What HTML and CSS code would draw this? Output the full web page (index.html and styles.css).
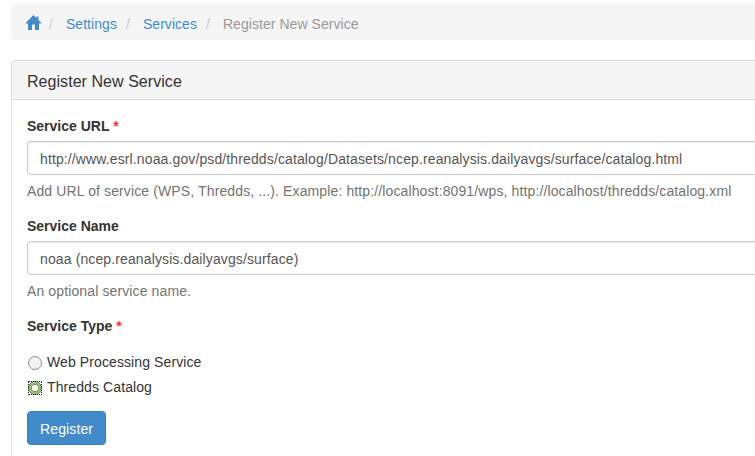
FILE: index.html
```html
<!DOCTYPE html>
<html lang="en">
<head>
<meta charset="utf-8">
<title>Register New Service</title>
<link rel="stylesheet" href="styles.css">
</head>
<body>
<main class="container">
  <ol class="breadcrumb">
    <li><a href="#" aria-label="Home"><svg class="home" viewBox="0 0 16 15" width="16" height="15"><path d="M7.5 0L0 7.5V8.5h2V15h4V9.5h3V15h4V8.5h2V7.5L12.5 5V1.5h-2V3z"/></svg></a></li>
    <li><a href="#">Settings</a></li>
    <li><a href="#">Services</a></li>
    <li class="active">Register New Service</li>
  </ol>
  <section class="panel">
    <h3 class="panel-heading">Register New Service</h3>
    <form class="panel-body">
      <div class="form-group">
        <label class="control-label" for="url">Service URL <span class="required">*</span></label>
        <input class="form-control" id="url" type="text" value="http://www.esrl.noaa.gov/psd/thredds/catalog/Datasets/ncep.reanalysis.dailyavgs/surface/catalog.html">
        <p class="help-block">Add URL of service (WPS, Thredds, ...). Example: http://localhost:8091/wps, http://localhost/thredds/catalog.xml</p>
      </div>
      <div class="form-group">
        <label class="control-label" for="name">Service Name</label>
        <input class="form-control" id="name" type="text" value="noaa (ncep.reanalysis.dailyavgs/surface)">
        <p class="help-block">An optional service name.</p>
      </div>
      <div class="form-group">
        <div class="control-label">Service Type <span class="required">*</span></div>
        <div class="radios">
          <label class="radio"><span class="dot"></span>Web Processing Service</label>
          <label class="radio"><span class="focus"><span class="dot selected"></span></span>Thredds Catalog</label>
        </div>
      </div>
      <button class="btn" type="button">Register</button>
    </form>
  </section>
</main>
</body>
</html>
```
FILE: styles.css
```css
* { box-sizing: border-box; }
body { margin: 0; font: 14px/20px "Liberation Sans", Arial, sans-serif; color: #333; background: #fff; }
a { color: #428bca; text-decoration: none; }
.container { display: flex; flex-direction: column; height: 456px; padding: 4px 0 0 11px; }
.breadcrumb { display: flex; flex: none; list-style: none; margin: 0 0 20px; padding: 10px 15px 6px; height: 36px; background: #f5f5f5; border-radius: 4px 0 0 4px; letter-spacing: .05px; }
.breadcrumb li + li::before { content: "/"; color: #ccc; padding: 0 13px 0 9px; }
.breadcrumb li:nth-child(2)::before { padding-left: 7px; }
.home { display: block; fill: #428bca; margin-top: 1px; }
.breadcrumb .active { color: #999; }
.panel { flex: 1; border: solid #ddd; border-width: 1px 0 0 1px; border-radius: 4px 0 0 0; }
.panel-heading { margin: 0; height: 39px; padding: 11px 15px 0; font-size: 16px; line-height: 20px; font-weight: 400; letter-spacing: .05px; background: #f5f5f5; border-bottom: 1px solid #ddd; border-radius: 3px 0 0 0; }
.panel-body { padding: 16px 0 0 15px; }
.form-group { margin-bottom: 15px; }
.control-label { display: block; font-weight: 700; margin-bottom: 5px; }
.required { color: #f33; font-weight: 700; }
.form-control { display: block; width: 100%; height: 34px; padding: 7px 12px 5px; border: 1px solid #ccc; border-right: 0; border-radius: 4px 0 0 4px; font: inherit; letter-spacing: .12px; color: #555; box-shadow: inset 0 1px 1px rgba(0,0,0,.075); }
.help-block { margin: 6px 0 0; color: #737373; white-space: nowrap; letter-spacing: .12px; }
.radios { margin-top: 16px; letter-spacing: .1px; }
.radio { display: flex; align-items: center; height: 20px; margin-bottom: 5px; }
.dot { width: 14px; height: 14px; margin: 2px 5px 0 1px; border: 1px solid #909090; border-radius: 50%; background: #f2f2f2; }
.focus { display: flex; width: 14px; height: 14px; margin: 2px 5px 0 1px; outline: 1px dotted #222; outline-offset: -1px; }
.selected { margin: 0; border: 1px solid #628048; background: radial-gradient(circle, #f6f6f2 0 3px, #7c9a62 3px 4px, #9cc278 4px 7px); }
.btn { display: block; margin-top: -1px; height: 34px; padding: 7px 12px 5px; border: 1px solid #357ebd; border-radius: 4px; background: #428bca; color: #fff; font: inherit; letter-spacing: .12px; }
```
